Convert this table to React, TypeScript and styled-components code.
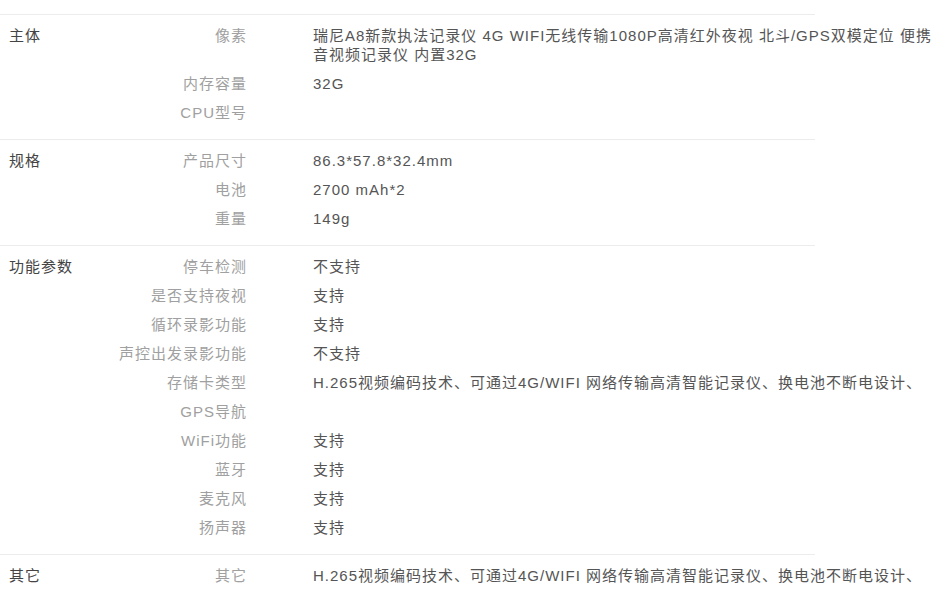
import styled, { createGlobalStyle } from 'styled-components';

const GlobalStyle = createGlobalStyle`
  html, body {
    margin: 0;
    padding: 0;
    background: #fff;
  }
  body {
    font-family: "Liberation Sans", "Noto Sans CJK SC", sans-serif;
    font-size: 15px;
  }
`;

type Param = { label: string; value?: string };
type Section = { title: string; params: Param[] };

const featureText = 'H.265视频编码技术、可通过4G/WIFI 网络传输高清智能记录仪、换电池不断电设计、';

const sections: Section[] = [
  {
    title: '主体',
    params: [
      { label: '像素', value: '瑞尼A8新款执法记录仪 4G WIFI无线传输1080P高清红外夜视 北斗/GPS双模定位 便携音视频记录仪 内置32G' },
      { label: '内存容量', value: '32G' },
      { label: 'CPU型号' },
    ],
  },
  {
    title: '规格',
    params: [
      { label: '产品尺寸', value: '86.3*57.8*32.4mm' },
      { label: '电池', value: '2700 mAh*2' },
      { label: '重量', value: '149g' },
    ],
  },
  {
    title: '功能参数',
    params: [
      { label: '停车检测', value: '不支持' },
      { label: '是否支持夜视', value: '支持' },
      { label: '循环录影功能', value: '支持' },
      { label: '声控出发录影功能', value: '不支持' },
      { label: '存储卡类型', value: featureText },
      { label: 'GPS导航' },
      { label: 'WiFi功能', value: '支持' },
      { label: '蓝牙', value: '支持' },
      { label: '麦克风', value: '支持' },
      { label: '扬声器', value: '支持' },
    ],
  },
  {
    title: '其它',
    params: [{ label: '其它', value: featureText }],
  },
];

const Page = styled.div`
  padding-top: 14px;
`;

const Group = styled.section`
  display: flex;
  width: 815px;
  border-top: 1px solid #ececec;
  padding: 11px 0 17px;
`;

const GroupTitle = styled.h4`
  margin: 0;
  width: 100px;
  padding-left: 9px;
  flex-shrink: 0;
  font-size: 15px;
  font-weight: normal;
  line-height: 19px;
  letter-spacing: 1px;
  color: #444;
`;

const ParamList = styled.dl`
  margin: 0;
  display: flex;
  flex-direction: column;
  gap: 10px;
`;

const ParamRow = styled.div`
  display: flex;
  min-height: 19px;
  line-height: 19px;
  letter-spacing: 1px;
`;

const ParamLabel = styled.dt`
  width: 138px;
  flex-shrink: 0;
  text-align: right;
  color: #a0a0a0;
`;

const ParamValue = styled.dd`
  margin: 0 0 0 66px;
  width: 625px;
  flex-shrink: 0;
  color: #555;
`;

export default function App() {
  return (
    <Page>
      <GlobalStyle />
      {sections.map(section => (
        <Group key={section.title}>
          <GroupTitle>{section.title}</GroupTitle>
          <ParamList>
            {section.params.map(param => (
              <ParamRow key={param.label}>
                <ParamLabel>{param.label}</ParamLabel>
                <ParamValue>{param.value}</ParamValue>
              </ParamRow>
            ))}
          </ParamList>
        </Group>
      ))}
    </Page>
  );
}
